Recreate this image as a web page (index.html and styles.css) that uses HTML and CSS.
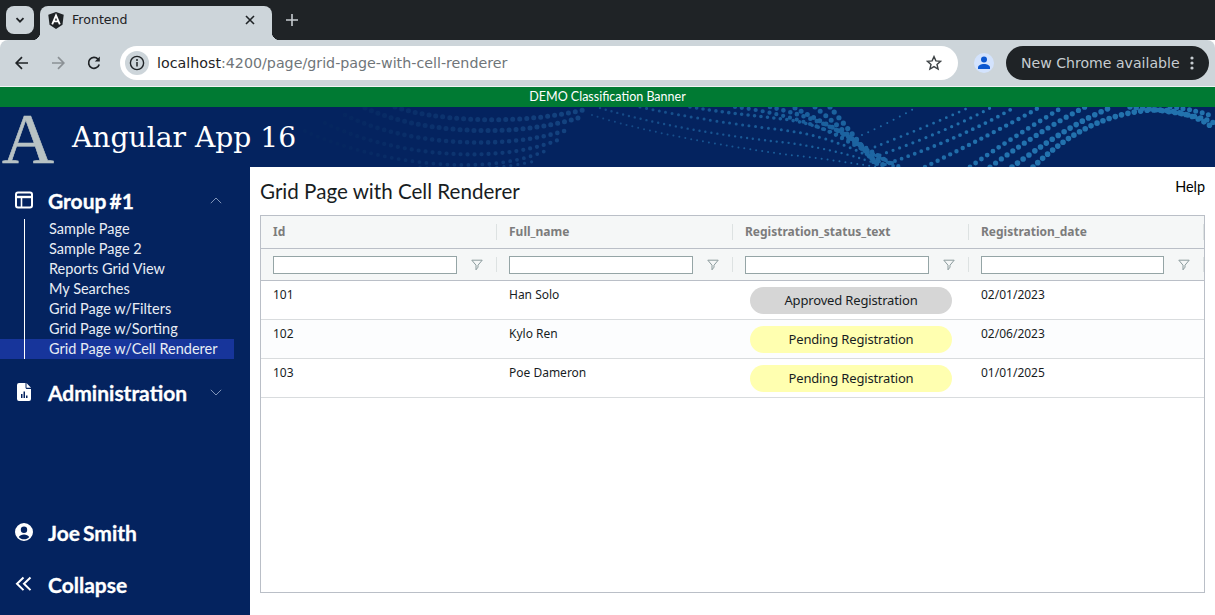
FILE: index.html
```html
<!DOCTYPE html>
<html lang="en">
<head>
    <meta charset="UTF-8">
    <meta name="viewport" content="width=device-width, initial-scale=1.0">
    <title>Frontend</title>
    <link rel="stylesheet" href="styles.css">
</head>
<body>
    <!-- Browser tabs -->
    <div class="tabstrip">
        <div class="tab-search">
            <svg width="12" height="12" viewBox="0 0 12 12"><path d="M2.5 4.2 6 7.7l3.5-3.5" fill="none" stroke="#1f2326" stroke-width="1.8"/></svg>
        </div>
        <div class="tab">
            <svg class="favicon" width="16" height="17" viewBox="0 0 16 17">
                <path d="M8 0 .3 2.8l1.2 10L8 17l6.5-4.2 1.2-10z" fill="#1f2326"/>
                <path d="M4.2 12.4 8 3.4l3.8 9M5.6 9.4h4.8" fill="none" stroke="#fff" stroke-width="1.8"/>
            </svg>
            <span class="tab-title">Frontend</span>
            <svg class="tab-close" width="10" height="10" viewBox="0 0 10 10"><path d="M1 1l8 8M9 1l-8 8" stroke="#1f2326" stroke-width="1.6"/></svg>
        </div>
        <svg class="tab-new" width="12" height="12" viewBox="0 0 12 12"><path d="M6 0v12M0 6h12" stroke="#c7cdd1" stroke-width="1.6"/></svg>
    </div>

    <!-- Browser toolbar -->
    <div class="toolbar">
        <svg class="nav-icon" width="16" height="16" viewBox="0 0 16 16"><path d="M14 8H2.6M8 2.2 2.2 8 8 13.8" fill="none" stroke="#1f2326" stroke-width="1.7"/></svg>
        <svg class="nav-icon" width="16" height="16" viewBox="0 0 16 16"><path d="M2 8h11.4M8 2.2 13.8 8 8 13.8" fill="none" stroke="#8b9195" stroke-width="1.7"/></svg>
        <svg class="nav-icon" width="16" height="16" viewBox="0 0 16 16"><path d="M13.2 9.4A5.4 5.4 0 1 1 12 4.2" fill="none" stroke="#1f2326" stroke-width="1.7"/><path d="M13.8 1.6v5h-5z" fill="#1f2326"/></svg>
        <div class="omnibox">
            <div class="site-info">
                <svg width="16" height="16" viewBox="0 0 16 16"><circle cx="8" cy="8" r="6.6" fill="none" stroke="#1f2326" stroke-width="1.4"/><path d="M8 7v4.4" stroke="#1f2326" stroke-width="1.5"/><circle cx="8" cy="5" r="1" fill="#1f2326"/></svg>
            </div>
            <div class="url"><span class="url-host">localhost</span>:4200/page/grid-page-with-cell-renderer</div>
            <svg width="16" height="16" viewBox="0 0 16 16"><path d="M8 1.6l1.9 4.3 4.7.4-3.6 3.1 1.1 4.6L8 11.6l-4.1 2.4L5 9.4 1.4 6.3l4.7-.4z" fill="none" stroke="#3d4245" stroke-width="1.4"/></svg>
        </div>
        <div class="profile">
            <svg width="14" height="14" viewBox="0 0 14 14"><circle cx="7" cy="3.6" r="3" fill="#0b57d0"/><path d="M1 13v-1.6C1 9.4 4 8 7 8s6 1.4 6 3.4V13z" fill="#0b57d0"/></svg>
        </div>
        <div class="update-pill">
            <span>New Chrome available</span>
            <svg width="4" height="14" viewBox="0 0 4 14"><circle cx="2" cy="2" r="1.6" fill="#c7cdd1"/><circle cx="2" cy="7" r="1.6" fill="#c7cdd1"/><circle cx="2" cy="12" r="1.6" fill="#c7cdd1"/></svg>
        </div>
    </div>

    <div class="classification">DEMO Classification Banner</div>

    <header class="app-header">
        <svg class="wave" width="1215" height="60" viewBox="0 0 1215 60" fill="none" stroke="url(#waveColor)" stroke-linecap="round">
            <defs>
                <linearGradient id="waveColor" gradientUnits="userSpaceOnUse" x1="340" y1="0" x2="1000" y2="0">
                    <stop offset="0" stop-color="#05265f"/>
                    <stop offset="0.3" stop-color="#123f7c"/>
                    <stop offset="0.7" stop-color="#1a5f9c"/>
                    <stop offset="1" stop-color="#2272ae"/>
                </linearGradient>
            </defs>
            <!-- left lobe -->
            <path stroke-width="5" stroke-dasharray="0 7" d="M395 0C430 12 510 20 583 3"/>
            <path stroke-width="5" stroke-dasharray="0 7" d="M365 1C415 24 505 33 578 11"/>
            <path stroke-width="4.6" stroke-dasharray="0 7" d="M345 8C400 36 500 46 570 22"/>
            <path stroke-width="4.2" stroke-dasharray="0 7" d="M325 16C385 46 490 60 558 33"/>
            <path stroke-width="3.8" stroke-dasharray="0 7" d="M305 24C370 54 480 72 545 44"/>
            <path stroke-width="3.2" stroke-dasharray="0 7" d="M420 60C460 66 510 60 535 54"/>
            <!-- lines going down to the right -->
            <path stroke-width="2" stroke-dasharray="0 6" d="M592 8C660 30 760 44 790 48C830 52 860 58 880 60"/>
            <path stroke-width="2.4" stroke-dasharray="0 6" d="M600 1C670 22 750 32 790 36C830 42 860 50 885 60"/>
            <path stroke-width="3" stroke-dasharray="0 6.5" d="M640 0C710 15 760 20 790 24C830 30 860 44 890 60"/>
            <path stroke-width="3.6" stroke-dasharray="0 6.5" d="M690 0C740 8 770 10 790 13C830 20 860 38 895 60"/>
            <path stroke-width="4.2" stroke-dasharray="0 7" d="M735 0C770 4 810 14 840 30C860 42 880 50 900 60"/>
            <path stroke-width="4.6" stroke-dasharray="0 7" d="M770 0C795 6 825 14 855 34C870 44 885 52 895 60"/>
            <path stroke-width="5" stroke-dasharray="0 7" d="M795 1C815 12 845 24 870 46C875 50 880 54 885 60"/>
            <path stroke-width="5" stroke-dasharray="0 7" d="M815 0C830 12 850 28 880 60"/>
            <path stroke-width="5.2" stroke-dasharray="0 7" d="M830 0C840 12 855 30 878 60"/>
            <!-- lines going up to the right -->
            <path stroke-width="5.6" stroke-dasharray="0 6.5" d="M1033 60C1060 35 1095 8 1150 3C1175 2 1200 10 1213 21"/>
            <path stroke-width="5.4" stroke-dasharray="0 6.5" d="M1130 0C1160 3 1200 8 1214 16"/>
            <path stroke-width="5" stroke-dasharray="0 6.5" d="M1170 0C1190 2 1205 6 1214 10"/>
            <path stroke-width="5.6" stroke-dasharray="0 7" d="M1012 60C1040 40 1075 15 1112 0"/>
            <path stroke-width="5.2" stroke-dasharray="0 7" d="M990 60C1015 42 1050 18 1085 0"/>
            <path stroke-width="4.8" stroke-dasharray="0 7" d="M970 60C995 42 1030 20 1063 0"/>
            <path stroke-width="4.4" stroke-dasharray="0 7" d="M925 60C965 40 1005 20 1040 0"/>
            <path stroke-width="3.8" stroke-dasharray="0 7" d="M895 54C940 38 985 18 1015 0"/>
            <path stroke-width="3.2" stroke-dasharray="0 7" d="M880 48C920 34 965 15 992 0"/>
            <path stroke-width="2.8" stroke-dasharray="0 7" d="M875 40C905 28 945 12 970 0"/>
            <path stroke-width="2" stroke-dasharray="0 7" d="M862 28C880 20 900 10 917 0"/>
        </svg>
        <span class="logo-letter">A</span>
        <span class="app-title">Angular App 16</span>
    </header>

    <div class="app-body">
        <nav class="sidebar">
            <div class="sidebar-top">
                <div class="group-head">
                    <svg class="group-icon" width="18" height="18" viewBox="0 0 18 18" fill="none" stroke="#fff"><rect x="1" y="1.5" width="16" height="15" rx="2" stroke-width="2"/><path d="M1 6h16" stroke-width="2.4"/><path d="M6.5 6v10" stroke-width="1.6"/></svg>
                    <span>Group #1</span>
                    <svg class="chevron" width="12" height="7" viewBox="0 0 12 7"><path d="M.8 6.2 6 1l5.2 5.2" fill="none" stroke="#7f93b8" stroke-width="1"/></svg>
                </div>
                <ul class="group-items">
                    <li>Sample Page</li>
                    <li>Sample Page 2</li>
                    <li>Reports Grid View</li>
                    <li>My Searches</li>
                    <li>Grid Page w/Filters</li>
                    <li>Grid Page w/Sorting</li>
                    <li class="active">Grid Page w/Cell Renderer</li>
                </ul>
                <div class="group-head group-admin">
                    <svg class="group-icon" width="18" height="18" viewBox="0 0 18 18"><path fill-rule="evenodd" fill="#fff" d="M4 0h6.5v4.5c0 .8.7 1.500 1.500 1.500h4V16a2 2 0 0 1-2 2H4a2 2 0 0 1-2-2V2a2 2 0 0 1 2-2zM6 11v4h1.500v-4zM8.500 8.500V15H10V8.500zM11 12.500V15h1.500v-2.500z"/><path fill="#fff" d="M11.500 0 16 4.800h-4.500z"/></svg>
                    <span>Administration</span>
                    <svg class="chevron" width="12" height="7" viewBox="0 0 12 7"><path d="M.8.800 6 6l5.200-5.200" fill="none" stroke="#7f93b8" stroke-width="1"/></svg>
                </div>
            </div>
            <div class="sidebar-bottom">
                <div class="group-head">
                    <svg class="group-icon" width="18" height="18" viewBox="0 0 18 18"><path fill-rule="evenodd" fill="#fff" d="M9 0a9 9 0 1 1 0 18A9 9 0 0 1 9 0zm0 3.500a3.200 3.200 0 1 0 0 6.400 3.200 3.200 0 0 0 0-6.400zM3.800 14c1.200 1.500 3.100 2.300 5.200 2.300s4-.8 5.200-2.300c-.8-1.600-2.900-2.600-5.200-2.600s-4.400 1-5.200 2.600z"/></svg>
                    <span>Joe Smith</span>
                </div>
                <div class="group-head">
                    <svg class="group-icon" width="18" height="18" viewBox="0 0 18 18"><path d="M8.500 2.500 2 8.800l6.500 6.300M15.500 2.500 9 8.800l6.500 6.300" fill="none" stroke="#fff" stroke-width="2"/></svg>
                    <span>Collapse</span>
                </div>
            </div>
        </nav>

        <main class="content">
            <div class="page-head">
                <h1>Grid Page with Cell Renderer</h1>
                <a class="help">Help</a>
            </div>

            <div class="grid">
                <div class="grid-row header-row">
                    <div class="head-cell">Id</div>
                    <div class="head-cell">Full_name</div>
                    <div class="head-cell">Registration_status_text</div>
                    <div class="head-cell">Registration_date</div>
                </div>
                <div class="grid-row filter-row">
                    <div class="filter-cell"><input type="text"><svg class="funnel" width="12" height="12" viewBox="0 0 12 12"><path d="M.8 1.200h10.400L7 6.200v2L5 10.800V6.200z" fill="none" stroke="#8a9a9c" stroke-width="1"/></svg></div>
                    <div class="filter-cell"><input type="text"><svg class="funnel" width="12" height="12" viewBox="0 0 12 12"><path d="M.8 1.200h10.400L7 6.200v2L5 10.800V6.200z" fill="none" stroke="#8a9a9c" stroke-width="1"/></svg></div>
                    <div class="filter-cell"><input type="text"><svg class="funnel" width="12" height="12" viewBox="0 0 12 12"><path d="M.8 1.200h10.400L7 6.200v2L5 10.800V6.200z" fill="none" stroke="#8a9a9c" stroke-width="1"/></svg></div>
                    <div class="filter-cell"><input type="text"><svg class="funnel" width="12" height="12" viewBox="0 0 12 12"><path d="M.8 1.200h10.400L7 6.200v2L5 10.800V6.200z" fill="none" stroke="#8a9a9c" stroke-width="1"/></svg></div>
                </div>
                <div class="grid-row data-row">
                    <div class="cell">101</div>
                    <div class="cell">Han Solo</div>
                    <div class="cell-status"><span class="status status-approved">Approved Registration</span></div>
                    <div class="cell">02/01/2023</div>
                </div>
                <div class="grid-row data-row odd">
                    <div class="cell">102</div>
                    <div class="cell">Kylo Ren</div>
                    <div class="cell-status"><span class="status status-pending">Pending Registration</span></div>
                    <div class="cell">02/06/2023</div>
                </div>
                <div class="grid-row data-row">
                    <div class="cell">103</div>
                    <div class="cell">Poe Dameron</div>
                    <div class="cell-status"><span class="status status-pending">Pending Registration</span></div>
                    <div class="cell">01/01/2025</div>
                </div>
            </div>
        </main>
    </div>
</body>
</html>
```

FILE: styles.css
```css
html, body {
    height: 100%;
}

body {
    margin: 0;
    display: flex;
    flex-direction: column;
    overflow: hidden;
    font-family: "Lato", sans-serif;
    background-color: #fff;
}

/* Browser frame */
.tabstrip {
    flex: none;
    height: 40px;
    display: flex;
    align-items: flex-start;
    padding: 6px 0 0 6px;
    box-sizing: border-box;
    background-color: #1f2326;
}

.tab-search {
    width: 28px;
    height: 28px;
    margin-right: 6px;
    display: flex;
    align-items: center;
    justify-content: center;
    border-radius: 8px;
    background-color: #cdd5da;
}

.tab {
    position: relative;
    width: 232px;
    height: 34px;
    display: flex;
    align-items: center;
    padding: 0 17px 6px 8px;
    box-sizing: border-box;
    border-radius: 8px 8px 0 0;
    background-color: #cdd5da;
}

.tab::before,
.tab::after {
    content: "";
    position: absolute;
    bottom: 0;
    width: 8px;
    height: 8px;
}

.tab::before {
    left: -8px;
    background: radial-gradient(circle at 0 0, #1f2326 8px, #cdd5da 8.5px);
}

.tab::after {
    right: -8px;
    background: radial-gradient(circle at 100% 0, #1f2326 8px, #cdd5da 8.5px);
}

.tab-title {
    flex: 1;
    margin: 0 0 2px 8px;
    font-family: "DejaVu Sans", sans-serif;
    font-size: 12.6px;
    color: #1f2326;
}

.tab-new {
    margin: 8px 0 0 14px;
}

.toolbar {
    flex: none;
    height: 47px;
    display: flex;
    align-items: center;
    padding: 0 6px 0 14px;
    box-sizing: border-box;
    border-radius: 8px 8px 0 0;
    border-bottom: 1px solid #f1f3f4;
    background-color: #cdd5da;
}

.nav-icon {
    margin-right: 20px;
}

.nav-icon:nth-child(3) {
    margin-right: 18px;
}

.omnibox {
    width: 838px;
    height: 34px;
    display: flex;
    align-items: center;
    padding: 0 16px 0 5px;
    box-sizing: border-box;
    border-radius: 17px;
    background-color: #fff;
}

.site-info {
    width: 24px;
    height: 24px;
    display: flex;
    align-items: center;
    justify-content: center;
    border-radius: 50%;
    background-color: #cdd5da;
}

.url {
    flex: 1;
    margin-left: 8px;
    font-family: "DejaVu Sans", sans-serif;
    font-size: 14.25px;
    color: #6f7579;
}

.url-host {
    color: #1f2326;
}

.profile {
    width: 20px;
    height: 20px;
    margin-left: 16px;
    display: flex;
    align-items: center;
    justify-content: center;
    border-radius: 50%;
    background-color: #d3e3fd;
}

.update-pill {
    width: 203px;
    height: 34px;
    margin-left: 12px;
    display: flex;
    align-items: center;
    justify-content: space-between;
    padding: 0 15px;
    box-sizing: border-box;
    border-radius: 17px;
    font-family: "DejaVu Sans", sans-serif;
    font-size: 14.1px;
    color: #c7cdd1;
    background-color: #1f2326;
}

/* App header */
.classification {
    flex: none;
    height: 20px;
    line-height: 20px;
    text-align: center;
    font-size: 12.5px;
    color: #fff;
    background-color: #007a33;
}

.app-header {
    flex: none;
    position: relative;
    height: 60px;
    display: flex;
    align-items: center;
    background-color: #04235f;
}

.wave {
    position: absolute;
    top: 0;
    left: 0;
}

.logo-letter {
    position: relative;
    width: 72px;
    margin-top: 4px;
    padding-left: 2px;
    box-sizing: border-box;
    font-family: "Liberation Serif", serif;
    font-size: 72px;
    line-height: 56px;
    color: #b8c2c4;
    -webkit-text-stroke: 0.6px #b8c2c4;
}

.app-title {
    position: relative;
    font-family: "DejaVu Serif", serif;
    font-size: 28.2px;
    color: #fff;
}

/* Sidebar */
.app-body {
    flex: 1;
    min-height: 0;
    display: flex;
}

.sidebar {
    flex: none;
    width: 250px;
    display: flex;
    flex-direction: column;
    justify-content: space-between;
    padding: 16px 0 12px;
    box-sizing: border-box;
    color: #fff;
    background-color: #04235f;
}

.group-head {
    height: 36px;
    display: flex;
    align-items: center;
    padding: 0 28px 2px 15px;
    box-sizing: border-box;
    font-size: 21px;
    font-weight: 700;
    word-spacing: -2px;
    -webkit-text-stroke: 0.3px #fff;
}

.group-head span {
    flex: 1;
    margin-left: 15px;
}

.chevron {
    flex: none;
}

.group-admin {
    margin-top: 16px;
}

.group-items {
    position: relative;
    width: 234px;
    margin: 0;
    padding: 0;
    list-style: none;
    font-size: 14.5px;
    color: #e8edf5;
}

.group-items::before {
    content: "";
    position: absolute;
    top: 0;
    bottom: 0;
    left: 24px;
    width: 1px;
    background-color: #fff;
}

.group-items li {
    height: 20px;
    line-height: 20px;
    padding-left: 49px;
}

.group-items .active {
    background-color: #17359b;
}

.sidebar-bottom {
    display: flex;
    flex-direction: column;
    gap: 16px;
}

/* Content */
.content {
    flex: 1;
    min-width: 0;
    display: flex;
    flex-direction: column;
    padding: 0 10px 22px;
}

.page-head {
    flex: none;
    height: 48px;
    display: flex;
    justify-content: space-between;
}

.page-head h1 {
    margin: 12px 0 0;
    font-size: 20.6px;
    font-weight: 400;
    line-height: 24px;
    color: #181d1f;
}

.help {
    margin-top: 11px;
    font-size: 14.4px;
    line-height: 17px;
    color: #000;
}

.grid {
    flex: 1;
    min-height: 0;
    overflow: hidden;
    border: 1px solid #babfc7;
    font-family: "Noto Sans", sans-serif;
    font-size: 12px;
    color: #181d1f;
}

.grid-row {
    display: grid;
    grid-template-columns: repeat(3, 236px) 235px;
    box-sizing: border-box;
}

.header-row {
    height: 33px;
    border-bottom: 1px solid #babfc7;
    background-color: #f5f7f7;
}

.head-cell {
    display: flex;
    align-items: center;
    padding: 0 12px 2px;
    font-weight: 700;
    color: #7c7c7c;
    background: linear-gradient(#dde2e2, #dde2e2) right center / 1px 16px no-repeat;
}

.filter-row {
    height: 32px;
    border-bottom: 1px solid #babfc7;
    background-color: #f5f7f7;
}

.filter-cell {
    display: flex;
    align-items: center;
    padding: 0 14px 0 12px;
    background: linear-gradient(#dde2e2, #dde2e2) right center / 1px 15px no-repeat;
}

.filter-cell input {
    flex: 1;
    min-width: 0;
    width: 0;
    height: 18px;
    margin: 0;
    padding: 0 4px;
    box-sizing: border-box;
    border: 1px solid #95a5a6;
    border-radius: 0;
    background-color: #fff;
}

.funnel {
    flex: none;
    margin-left: 14px;
}

.data-row {
    height: 39px;
    border-bottom: 1px solid #d9dcde;
}

.data-row.odd {
    background-color: #fcfdfe;
}

.cell {
    padding: 5px 12px 0;
    line-height: 17px;
}

.cell-status {
    display: flex;
    align-items: flex-start;
    padding: 6px 17px 0 17px;
}

.status {
    flex: 1;
    height: 27px;
    line-height: 27px;
    border-radius: 14px;
    text-align: center;
    font-size: 13px;
    letter-spacing: -0.15px;
}

.status-approved {
    background-color: #d6d6d6;
}

.status-pending {
    background-color: #ffffb0;
}
```
